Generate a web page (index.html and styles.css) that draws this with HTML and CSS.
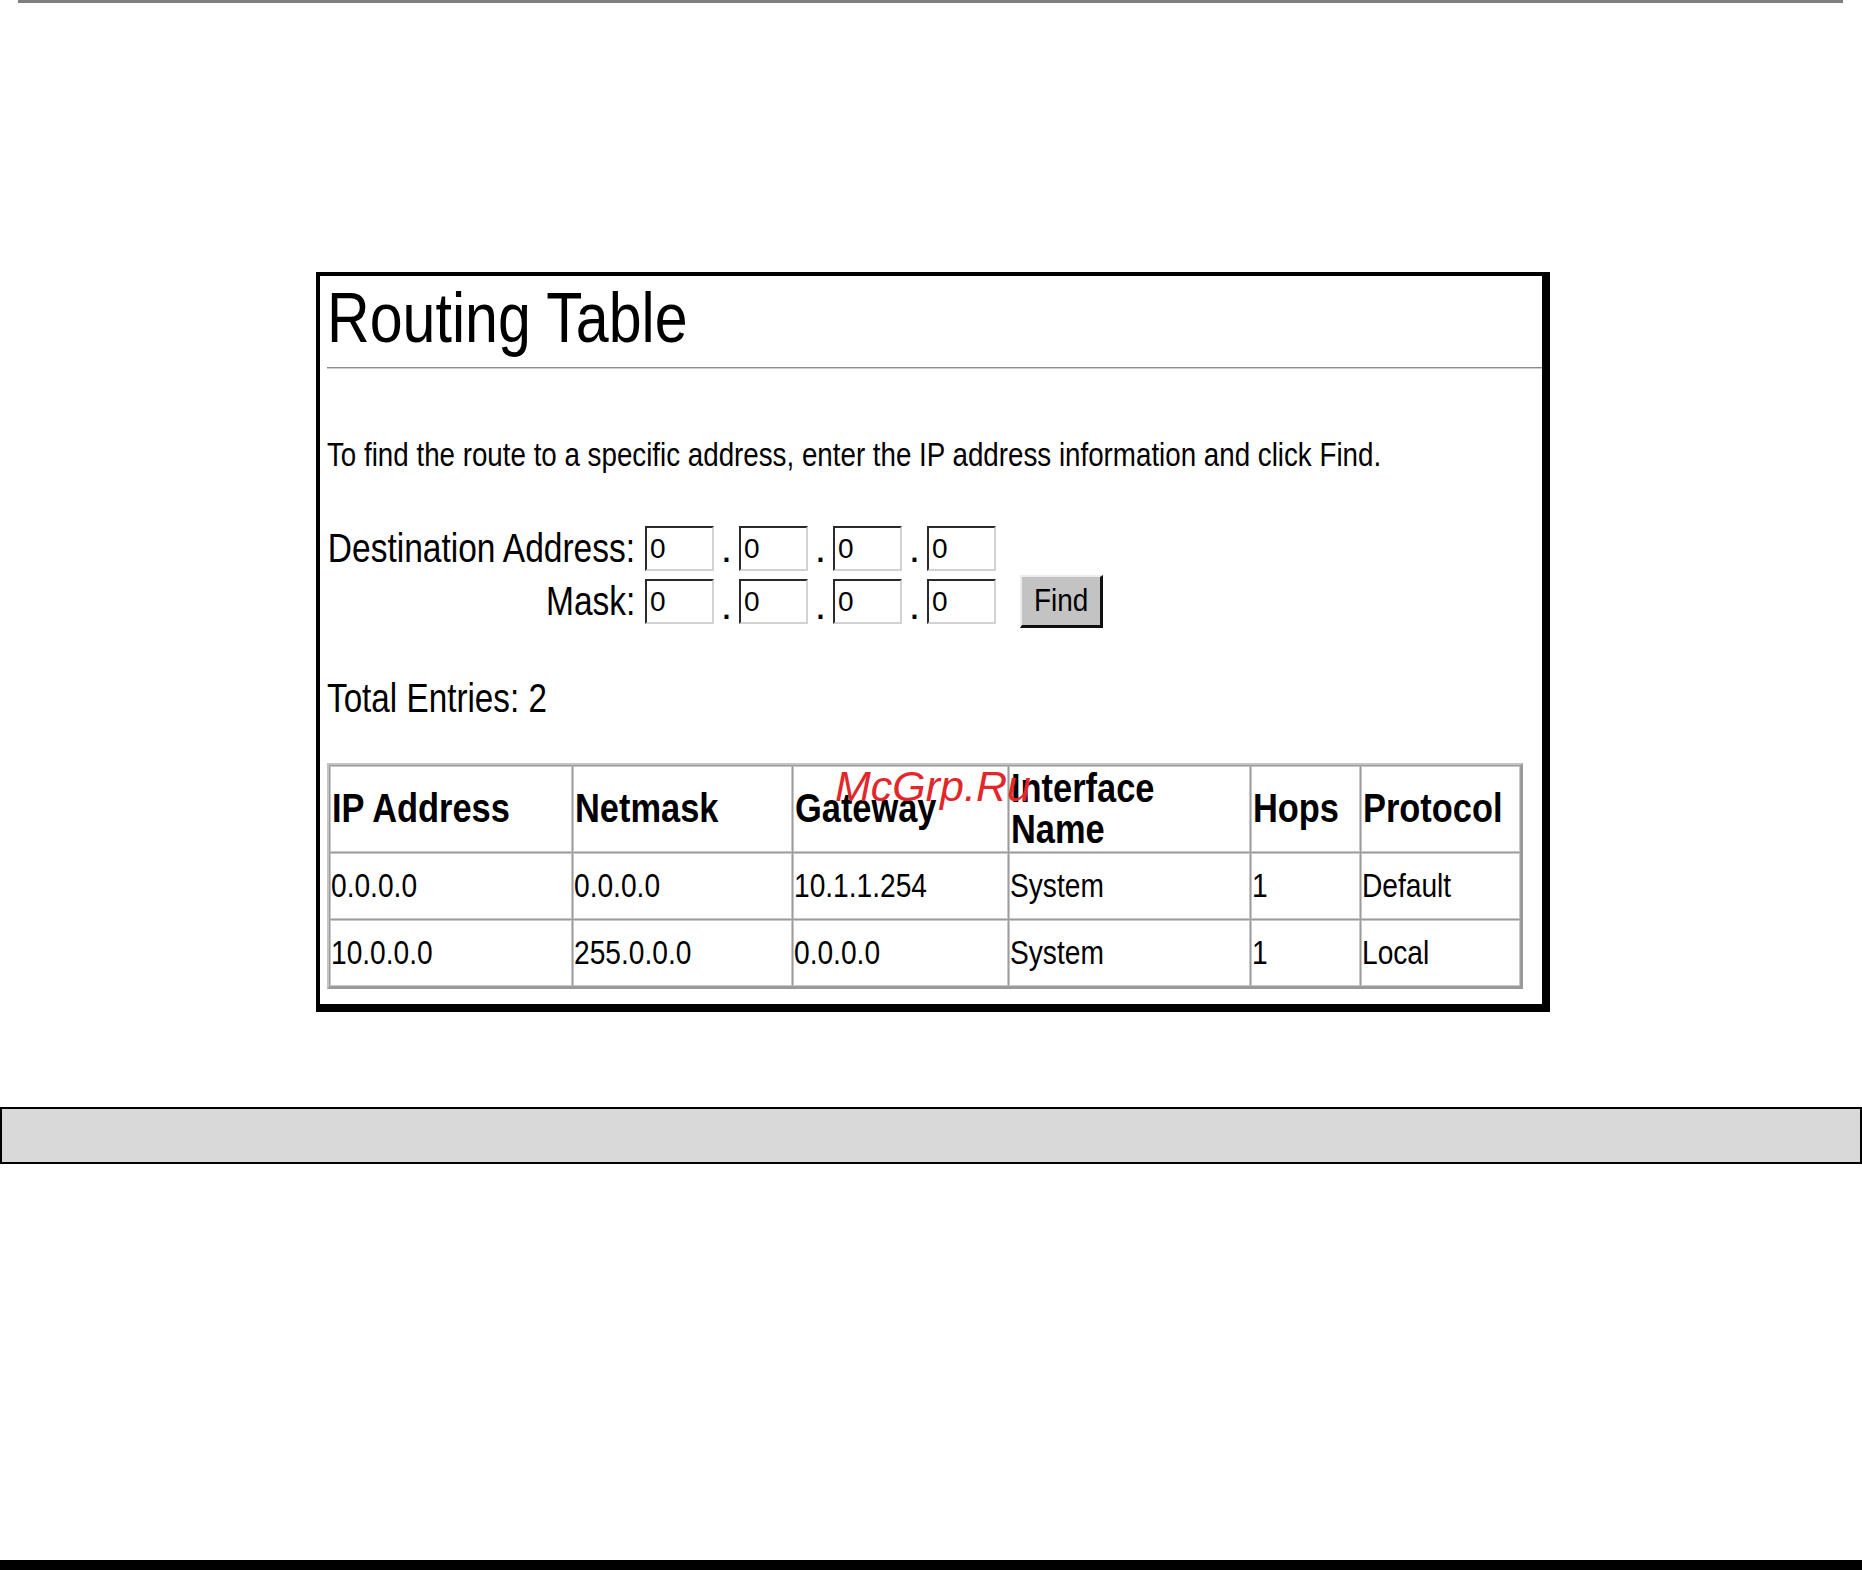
FILE: index.html
```html
<!DOCTYPE html>
<html>
<head>
<meta charset="utf-8">
<title>Routing Table</title>
<link rel="stylesheet" href="styles.css">
</head>
<body>
<div class="topline"></div>
<div class="panel">
  <h1 class="title"><span class="sx sx-title">Routing Table</span></h1>
  <hr class="rule">
  <p class="intro"><span class="sx sx-intro">To find the route to a specific address, enter the IP address information and click Find.</span></p>
  <div class="form-row">
    <span class="label"><span class="sx sx-label">Destination Address:</span></span>
    <input class="octet" type="text" value="0"><span class="dot">.</span><input class="octet" type="text" value="0"><span class="dot">.</span><input class="octet" type="text" value="0"><span class="dot">.</span><input class="octet" type="text" value="0">
  </div>
  <div class="form-row mask-row">
    <span class="label"><span class="sx sx-label">Mask:</span></span>
    <input class="octet" type="text" value="0"><span class="dot">.</span><input class="octet" type="text" value="0"><span class="dot">.</span><input class="octet" type="text" value="0"><span class="dot">.</span><input class="octet" type="text" value="0">
    <button class="find" type="button"><span class="sx sx-find">Find</span></button>
  </div>
  <p class="total"><span class="sx sx-total">Total Entries: 2</span></p>
  <table class="routes">
    <colgroup>
      <col class="c1"><col class="c2"><col class="c3"><col class="c4"><col class="c5"><col class="c6">
    </colgroup>
    <tr class="head">
      <th><span class="sx sx-th">IP Address</span></th>
      <th><span class="sx sx-th">Netmask</span></th>
      <th><span class="sx sx-th">Gateway</span></th>
      <th><span class="sx sx-th">Interface<br>Name</span></th>
      <th><span class="sx sx-th">Hops</span></th>
      <th><span class="sx sx-th">Protocol</span></th>
    </tr>
    <tr class="row1">
      <td><span class="sx sx-td">0.0.0.0</span></td>
      <td><span class="sx sx-td">0.0.0.0</span></td>
      <td><span class="sx sx-td">10.1.1.254</span></td>
      <td><span class="sx sx-td">System</span></td>
      <td><span class="sx sx-td">1</span></td>
      <td><span class="sx sx-td">Default</span></td>
    </tr>
    <tr class="row2">
      <td><span class="sx sx-td">10.0.0.0</span></td>
      <td><span class="sx sx-td">255.0.0.0</span></td>
      <td><span class="sx sx-td">0.0.0.0</span></td>
      <td><span class="sx sx-td">System</span></td>
      <td><span class="sx sx-td">1</span></td>
      <td><span class="sx sx-td">Local</span></td>
    </tr>
  </table>
  <div class="watermark">McGrp.Ru</div>
</div>
<div class="graybar"></div>
<div class="bottomline"></div>
</body>
</html>
```
FILE: styles.css
```css
html, body {
  margin: 0;
  padding: 0;
  background: #ffffff;
}
body {
  width: 1862px;
  font-family: "Liberation Sans", Arial, sans-serif;
  color: #000;
}
.topline {
  height: 3px;
  background: #808080;
  margin: 0 19px 0 18px;
}
.panel {
  position: relative;
  box-sizing: border-box;
  width: 1234px;
  margin: 269px 0 0 316px;
  border-style: solid;
  border-color: #000;
  border-width: 4px 8px 8px 4px;
  padding: 7px 0 15px 7px;
  background: #fff;
}
/* horizontally condensed text, as in the reference */
.sx {
  display: inline-block;
  white-space: nowrap;
  transform-origin: left center;
}
.sx-title { transform: scaleX(0.845); }
.sx-intro { transform: scaleX(0.828); }
.sx-label { transform: scaleX(0.817); transform-origin: right center; }
.sx-find { transform: scaleX(0.9); transform-origin: center center; }
.sx-total { transform: scaleX(0.811); }
.sx-th { transform: scaleX(0.86); }
.sx-td { transform: scaleX(0.84); }

.title {
  margin: 0;
  font-size: 70px;
  font-weight: normal;
  line-height: 70px;
  white-space: nowrap;
}
.rule {
  margin: 14px 0 0 0;
  height: 0;
  border: 0;
  border-top: 1px solid #8c8c8c;
  border-bottom: 1px solid #cfcfcf;
}
.intro {
  margin: 66px 0 0 0;
  font-size: 33.5px;
  line-height: 40px;
  white-space: nowrap;
}
.form-row {
  display: flex;
  align-items: center;
  height: 45px;
  margin-top: 51px;
}
.mask-row {
  height: 53px;
  margin-top: 4px;
}
.label {
  display: flex;
  justify-content: flex-end;
  flex: 0 0 308px;
  width: 308px;
  margin-right: 10px;
  font-size: 41px;
  line-height: 45px;
  white-space: nowrap;
}
.octet {
  box-sizing: border-box;
  width: 69px;
  height: 45px;
  margin: 0;
  padding: 0 0 0 3px;
  border-style: solid;
  border-width: 2px;
  border-color: #2a2a2a #d2d2d2 #d2d2d2 #2a2a2a;
  background: #fff;
  font-family: "Liberation Sans", Arial, sans-serif;
  font-size: 28px;
  color: #000;
  outline: none;
}
.dot {
  width: 25px;
  text-align: center;
  font-size: 41px;
  line-height: 45px;
  align-self: flex-end;
}
.find {
  box-sizing: border-box;
  width: 83px;
  height: 53px;
  margin: 0 0 0 24px;
  padding: 0;
  border-style: solid;
  border-width: 2px 3px 3px 2px;
  border-color: #ececec #101010 #101010 #ececec;
  background: #c3c3c3;
  font-family: "Liberation Sans", Arial, sans-serif;
  font-size: 31px;
  color: #000;
}
.total {
  margin: 46px 0 0 0;
  font-size: 41px;
  line-height: 48px;
}
.routes {
  margin-top: 41px;
  width: 1196px;
  table-layout: fixed;
  border-collapse: separate;
  border-spacing: 1px;
  border: 2px solid;
  border-color: #c4c4c4 #999 #999 #c4c4c4;
  background: #9c9c9c;
}
.c1 { width: 242px; }
.c2 { width: 219px; }
.c3 { width: 215px; }
.c4 { width: 241px; }
.c5 { width: 109px; }
.c6 { width: 159px; }
.routes th,
.routes td {
  box-sizing: border-box;
  background: #fff;
  border: 1px solid #c8c8c8;
  padding: 0 1px 0 0;
  text-align: left;
  vertical-align: middle;
  white-space: nowrap;
}
.routes th {
  height: 86px;
  padding-left: 1px;
  font-size: 40px;
  font-weight: bold;
  line-height: 41.5px;
}
.routes td {
  font-size: 33.5px;
  line-height: 38px;
}
.row1 td { height: 66px; }
.row2 td { height: 66px; }
.watermark {
  position: absolute;
  left: 515px;
  top: 489px;
  font-family: "Liberation Sans", Arial, sans-serif;
  font-style: italic;
  font-size: 43px;
  line-height: 43px;
  color: #e3262a;
  white-space: nowrap;
}
.graybar {
  box-sizing: border-box;
  height: 57px;
  margin-top: 95px;
  border: 2px solid #000;
  background: #d9d9d9;
}
.bottomline {
  height: 10px;
  margin-top: 396px;
  background: #000;
}
```
